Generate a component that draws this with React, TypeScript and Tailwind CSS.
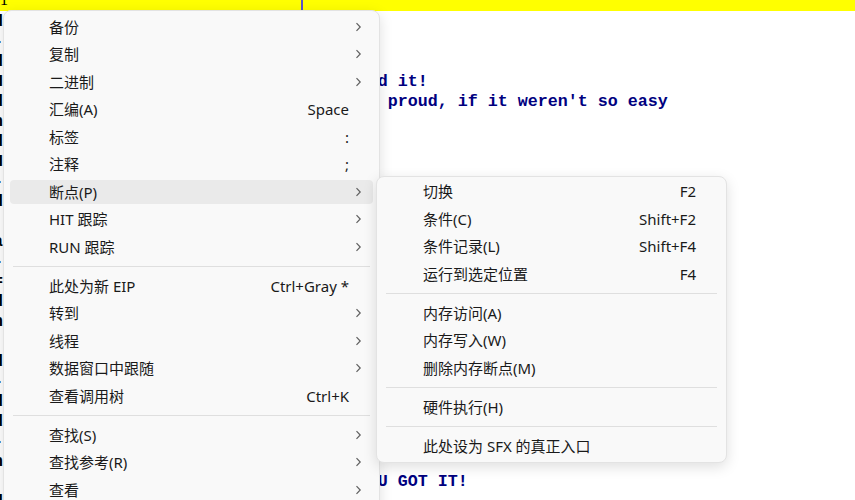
import clsx from "clsx";

// ─── Types ──────────────────────────────────────────────────────────────────

type Entry =
  | "sep"
  | {
      label: string;
      hotkey?: string;
      sub?: boolean;
      active?: boolean;
    };

// ─── Menu data ──────────────────────────────────────────────────────────────

const MAIN: Entry[] = [
  { label: "备份", sub: true },
  { label: "复制", sub: true },
  { label: "二进制", sub: true },
  { label: "汇编(A)", hotkey: "Space" },
  { label: "标签", hotkey: ":" },
  { label: "注释", hotkey: ";" },
  { label: "断点(P)", sub: true, active: true },
  { label: "HIT 跟踪", sub: true },
  { label: "RUN 跟踪", sub: true },
  "sep",
  { label: "此处为新 EIP", hotkey: "Ctrl+Gray *" },
  { label: "转到", sub: true },
  { label: "线程", sub: true },
  { label: "数据窗口中跟随", sub: true },
  { label: "查看调用树", hotkey: "Ctrl+K" },
  "sep",
  { label: "查找(S)", sub: true },
  { label: "查找参考(R)", sub: true },
  { label: "查看", sub: true },
  { label: "复制到可执行文件", sub: true },
];

const BREAKPOINTS: Entry[] = [
  { label: "切换", hotkey: "F2" },
  { label: "条件(C)", hotkey: "Shift+F2" },
  { label: "条件记录(L)", hotkey: "Shift+F4" },
  { label: "运行到选定位置", hotkey: "F4" },
  "sep",
  { label: "内存访问(A)" },
  { label: "内存写入(W)" },
  { label: "删除内存断点(M)" },
  "sep",
  { label: "硬件执行(H)" },
  "sep",
  { label: "此处设为 SFX 的真正入口" },
];

// dump lines behind the menus: [edge char peeking out on the left, blue text, start column]
const EDGE = "d-dHdndH-d a-=dn d-dd-n d";
const DUMP: [string, string, number][] = Array.from({ length: 25 }, (_, i) => {
  const edge = EDGE[i] ?? " ";
  if (i === 3) return [edge, "You have found it!", 24];
  if (i === 4) return [edge, "I would be proud, if it weren't so easy", 27];
  if (i === 23) return [edge, "YOU GOT IT!", 35];
  return [edge, "", 0];
});

// ─── Pieces ─────────────────────────────────────────────────────────────────

function Chevron() {
  return (
    <svg
      width="7"
      height="10"
      viewBox="0 0 7 10"
      fill="none"
      stroke="#5f5f5f"
      strokeWidth="1.2"
      aria-hidden="true"
    >
      <path d="M1.5 1.2 L5.2 5 L1.5 8.8" />
    </svg>
  );
}

function MenuList({ items, indent }: { items: Entry[]; indent: string }) {
  return (
    <>
      {items.map((it, i) =>
        it === "sep" ? (
          <div key={`sep-${i}`} className="mx-[9px] flex h-[11.5px] items-center">
            <div className="h-px w-full bg-[#dfdfdf]" />
          </div>
        ) : (
          <div key={it.label} className="h-[27.5px] px-[6px] py-[1.75px]">
            <div
              className={clsx(
                "flex h-full items-center rounded-[4px]",
                indent,
                it.active && "bg-[#eaeaea]",
              )}
            >
              <span className="flex-1 whitespace-pre">{it.label}</span>
              {it.hotkey && <span className="whitespace-pre">{it.hotkey}</span>}
              <span className="flex w-[24px] items-center pl-[6px]">
                {it.sub && <Chevron />}
              </span>
            </div>
          </div>
        ),
      )}
    </>
  );
}

// ─── Page ───────────────────────────────────────────────────────────────────

export default function App() {
  return (
    <div className="relative h-[500px] w-[855px] overflow-hidden bg-white">
      {/* selected row in yellow */}
      <div className="flex h-[11px] bg-[#ffff00]">
        <div className="w-[301px] font-['Liberation_Serif',serif] text-[16px] leading-[0px] text-black">
          1
        </div>
        <div className="w-[2px] bg-[#5a54c8]" />
        <div className="flex-1" />
      </div>

      {/* dump text */}
      <div className="mt-px font-['Liberation_Mono',monospace] text-[16.67px] font-bold leading-[20px]">
        {DUMP.map(([edge, text, col], i) => (
          <div key={i} className="flex h-[20px] whitespace-pre">
            <div className="w-[3px] shrink-0 overflow-hidden">
              <span className="-ml-[7px] inline-block text-black">{edge}</span>
            </div>
            <span className="ml-[5px] text-[#00007f]">
              {text ? " ".repeat(col) + text : ""}
            </span>
          </div>
        ))}
      </div>

      {/* main context menu */}
      <div className="absolute left-[3px] top-[10px] w-[377px] rounded-[8px] border border-[#e3e3e3] bg-[#f9f9f9] pt-[2px] pb-[3px] font-['Noto_Sans','Noto_Sans_CJK_SC',sans-serif] text-[15px] leading-[20px] text-[#1a1a1a] shadow-[0_4px_14px_rgba(0,0,0,0.13)]">
        <MenuList items={MAIN} indent="pl-[39px]" />
      </div>

      {/* breakpoint submenu */}
      <div className="absolute left-[376px] top-[176px] w-[351px] rounded-[8px] border border-[#e3e3e3] bg-[#f9f9f9] pt-[0.5px] pb-[2.5px] font-['Noto_Sans','Noto_Sans_CJK_SC',sans-serif] text-[15px] leading-[20px] text-[#1a1a1a] shadow-[0_4px_14px_rgba(0,0,0,0.13)]">
        <MenuList items={BREAKPOINTS} indent="pl-[40px]" />
      </div>
    </div>
  );
}
